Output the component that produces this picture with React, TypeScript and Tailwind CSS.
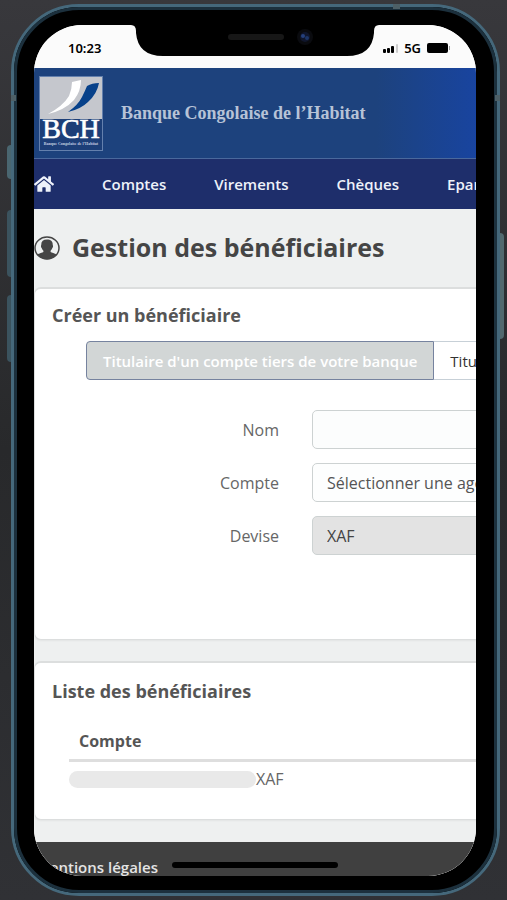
import type {ReactNode} from "react";
import {FaHome} from "react-icons/fa";

const NAV_LINKS = ["Comptes", "Virements", "Chèques", "Epargne"];

const FIELD =
    "h-[39px] flex-1 appearance-none rounded-[5px] border border-[#cdd2d2] px-[14px] text-base outline-none";

const StatusBar = () => (
    <div className="relative flex h-[43px] items-end justify-between bg-[#fbfbfb] pb-3 pl-[34px] pr-[25px] font-['Noto_Sans',sans-serif] text-black">
        <svg
            className="absolute left-1/2 top-0 -translate-x-1/2"
            width="248"
            height="32"
            viewBox="0 0 248 32"
            aria-hidden="true"
        >
            <path d="M0 0Q5 0 5 6V8Q7 31 32 31H216Q241 31 243 8V6Q243 0 248 0Z" fill="#000" />
            <rect x="97" y="9" width="56" height="6" rx="3" fill="#171717" />
            <circle cx="174" cy="12" r="8" fill="#0a0b0f" />
            <circle cx="174" cy="12" r="5" fill="#10162c" />
            <circle cx="172" cy="11" r="2" fill="#25407c" />
            <circle cx="176" cy="13" r="2" fill="#1c3466" />
        </svg>
        <span className="text-[13px] font-semibold leading-4">10:23</span>
        <div className="flex items-center gap-[6px]">
            <svg width="15" height="9" viewBox="0 0 15 9" aria-hidden="true">
                <rect x="0" y="5" width="3" height="4" rx="1" />
                <rect x="4" y="4" width="3" height="5" rx="1" />
                <rect x="8" y="2" width="3" height="7" rx="1" />
                <rect x="13" y="0" width="2" height="9" rx="1" fill="#ccc" />
            </svg>
            <span className="text-[13px] font-semibold leading-4">5G</span>
            <svg width="24" height="10" viewBox="0 0 24 10" aria-hidden="true">
                <rect x="0" y="0" width="21" height="10" rx="2" />
                <rect x="22" y="3" width="1" height="4" fill="#999" />
            </svg>
        </div>
    </div>
);

const Logo = () => (
    <svg width="64" height="75" viewBox="0 0 64 75" role="img" aria-label="BCH">
        <rect x="0.5" y="0.5" width="63" height="74" fill="#1d3f78" stroke="#6480ad" />
        <rect x="1" y="1" width="62" height="42" fill="#c5c7cd" />
        <path d="M33 6L42 4Q42 15 35 24Q26 34 9 38Q24 30 30 20Q33 13 33 6Z" fill="#fff" />
        <path d="M48 10Q53 7 60 7Q58 18 49 26Q42 33 29 36Q39 29 43 21Q46 15 48 10Z" fill="#07418a" />
        <text
            x="32"
            y="62"
            fill="#fff"
            fontSize="28"
            textAnchor="middle"
            stroke="#fff"
            strokeWidth="0.6"
            className="font-['Liberation_Serif',serif]"
        >
            BCH
        </text>
        <text
            x="32"
            y="69"
            fill="#c3cee0"
            fontSize="4"
            fontWeight="700"
            textAnchor="middle"
            className="font-['Liberation_Serif',serif]"
        >
            Banque Congolaise de l’Habitat
        </text>
    </svg>
);

const UserIcon = () => (
    <svg width="26" height="25" viewBox="0 0 26 25" aria-hidden="true">
        <ellipse cx="13" cy="12" rx="12" ry="11" fill="none" stroke="#454545" strokeWidth="1.5" />
        <path
            d="M13 3.500C17 3.500 19 5.500 18.700 9C19.400 9.500 19 11.800 18.200 12.200C17.800 13.500 17.200 14.200 16.600 14.800V16C17.500 17 21 17 22.800 18.800Q18.500 23.200 13 23.200Q7.500 23.200 3.200 18.800C5 17 8.500 17 9.400 16V14.800C8.800 14.200 8.200 13.500 7.800 12.200C7 11.800 6.600 9.500 7.300 9C7 5.500 9 3.500 13 3.500Z"
            fill="#454545"
        />
    </svg>
);

const Card = ({title, className, children}: {title: string; className: string; children: ReactNode}) => (
    <section
        className={`rounded-[7px] border border-t-2 border-[#dcdede] bg-white pl-[17px] shadow-xs ${className}`}
    >
        <h2 className="text-lg font-bold leading-6 text-[#555]">{title}</h2>
        {children}
    </section>
);

const Field = ({id, label, children}: {id: string; label: string; children: ReactNode}) => (
    <div className="flex items-center gap-[33px]">
        <label htmlFor={id} className="w-[227px] text-right text-base text-[#666]">
            {label}
        </label>
        {children}
    </div>
);

const BeneficiaryForm = () => (
    <form>
        <div className="ml-[34px] mt-[14px] flex text-[15px] leading-5">
            <button
                type="button"
                className="h-[39px] rounded-l-[4px] border border-[#76839f] bg-[#d2d6d6] px-4 font-semibold text-white"
            >
                Titulaire d'un compte tiers de votre banque
            </button>
            <button
                type="button"
                className="h-[39px] rounded-r-[4px] border border-l-0 border-[#c7d0d7] bg-white px-4 text-[#333]"
            >
                Titulaire d'un compte externe
            </button>
        </div>
        <div className="mt-[30px] flex flex-col gap-[14px]">
            <Field id="nom" label="Nom">
                <input id="nom" type="text" className={`${FIELD} bg-[#fcfdfd]`} />
            </Field>
            <Field id="compte" label="Compte">
                <select id="compte" className={`${FIELD} bg-[#fdfefe] text-[#555]`}>
                    <option>Sélectionner une agence</option>
                </select>
            </Field>
            <Field id="devise" label="Devise">
                <input
                    id="devise"
                    type="text"
                    value="XAF"
                    readOnly
                    className={`${FIELD} bg-[#e3e3e3] text-[#444]`}
                />
            </Field>
        </div>
    </form>
);

const BeneficiaryTable = () => (
    <table className="ml-[17px] mt-[22px] w-full text-left text-base leading-6">
        <thead>
            <tr className="border-b-[3px] border-[#dedede]">
                <th className="px-[10px] pb-[6px] pt-1 font-bold text-[#555]">Compte</th>
            </tr>
        </thead>
        <tbody>
            <tr>
                <td className="pt-[5px] text-[#666]">
                    <div className="flex items-center">
                        <span className="h-[17px] w-[187px] rounded-full bg-[#e9e9e9]" />
                        XAF
                    </div>
                </td>
            </tr>
        </tbody>
    </table>
);

const BankPage = () => (
    <div className="min-w-[760px] bg-[#eef0f0]">
        <header className="flex h-[91px] items-center gap-[18px] border-b border-[#4a689c] bg-linear-to-r from-[#1d427d] from-45% to-[#1844a4] to-60% pl-[5px]">
            <Logo />
            <p className="font-['Liberation_Serif',serif] text-lg font-bold text-[#b7c3d7]">
                Banque Congolaise de l’Habitat
            </p>
        </header>
        <nav className="flex h-[50px] items-center gap-12 bg-[#1e2e6b] text-[15px] font-semibold text-[#eef2fa]">
            <a href="#accueil" aria-label="Accueil">
                <FaHome size={20} />
            </a>
            {NAV_LINKS.map((link) => (
                <a key={link} href={`#${link.toLowerCase()}`}>
                    {link}
                </a>
            ))}
        </nav>
        <main>
            <h1 className="flex h-[78px] items-center gap-3 text-[25px] font-bold text-[#454545]">
                <UserIcon />
                Gestion des bénéficiaires
            </h1>
            <Card title="Créer un bénéficiaire" className="pb-[84px] pt-[14px]">
                <BeneficiaryForm />
            </Card>
            <Card title="Liste des bénéficiaires" className="mb-[22px] mt-[21px] pb-7 pt-4">
                <BeneficiaryTable />
            </Card>
        </main>
        <footer className="h-[34px] overflow-hidden bg-[#404040] pl-[2px] pt-[13px] text-[15px] font-semibold leading-6 text-[#e4e4e4]">
            <a href="#mentions">Mentions légales</a>
        </footer>
    </div>
);

export default function App() {
    return (
        <div className="min-h-screen bg-linear-to-b from-[#38383c] via-[#28292b] to-[#303135] pb-1 pl-[11px] pr-[7px] pt-1 font-['Open_Sans',sans-serif]">
            <div className="relative rounded-[68px] border-[3px] border-[#45687b] bg-black">
                <span className="absolute -left-[7px] top-[138px] h-[34px] w-1 rounded-l-sm bg-[#4a6670]" />
                <span className="absolute -left-[7px] top-[203px] h-[67px] w-1 rounded-l-sm bg-[#3b535e]" />
                <span className="absolute -left-[7px] top-[288px] h-[67px] w-1 rounded-l-sm bg-[#3b535e]" />
                <span className="absolute -right-[7px] top-[226px] h-[106px] w-1 rounded-r-sm bg-[#52696e]" />
                <span className="absolute -left-[3px] top-[88px] h-[6px] w-[5px] bg-[#4d5f66]" />
                <span className="absolute -right-[3px] top-[88px] h-[6px] w-[5px] bg-[#4d5f66]" />
                <span className="absolute -top-[3px] right-[97px] h-[5px] w-[7px] bg-[#4d5f66]" />
                <div className="rounded-[65px] border-[3px] border-[#1c303d] pb-[14px] pl-[17px] pr-[18px] pt-[15px]">
                    <div className="relative overflow-hidden rounded-[48px] bg-white">
                        <StatusBar />
                        <BankPage />
                        <span className="absolute bottom-2 left-1/2 h-[6px] w-[166px] -translate-x-1/2 rounded-full bg-black" />
                    </div>
                </div>
            </div>
        </div>
    );
}
